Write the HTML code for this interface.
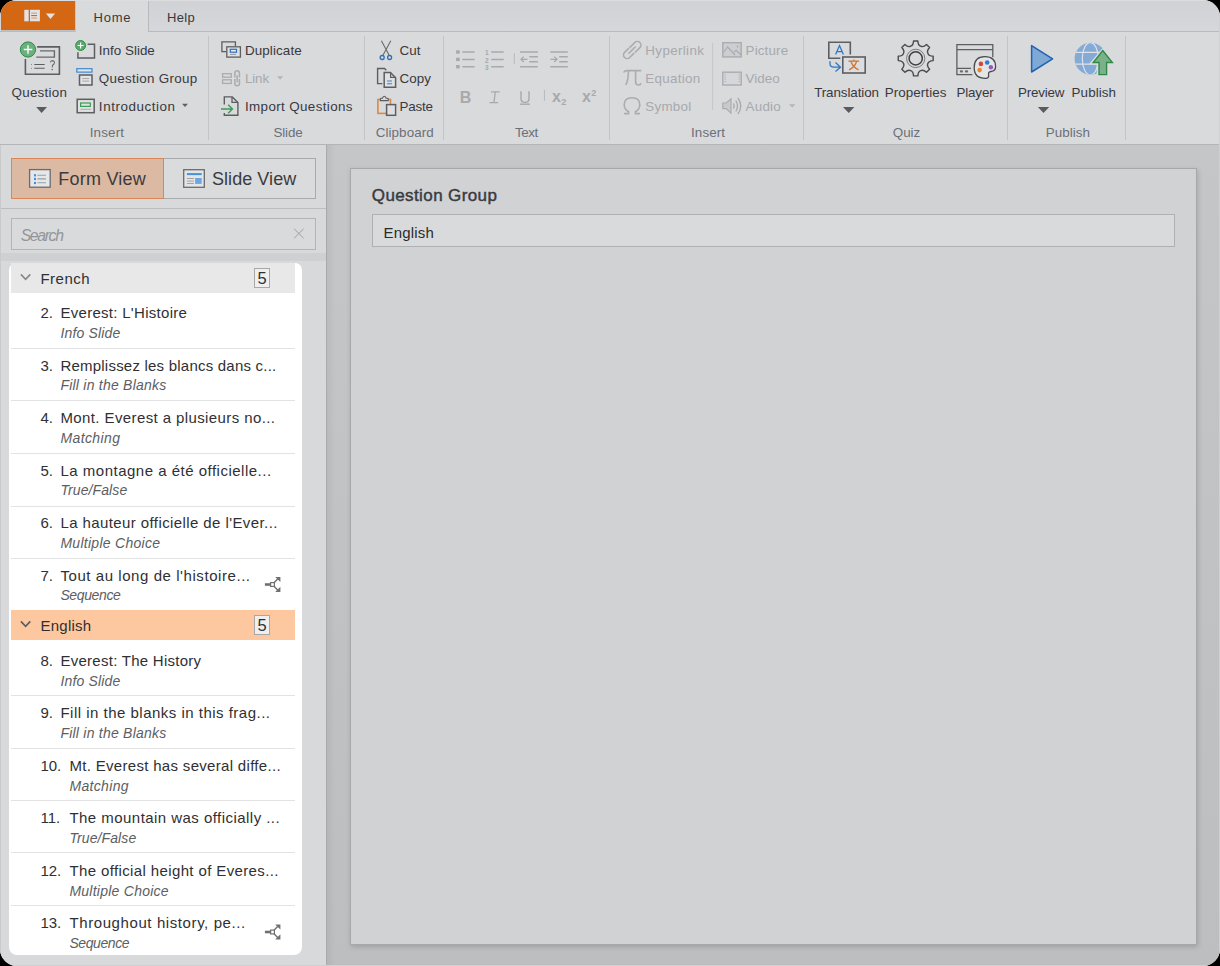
<!DOCTYPE html>
<html><head><meta charset="utf-8"><style>
html,body{margin:0;padding:0;width:1220px;height:966px;overflow:hidden;background:#000;}
#win{position:absolute;left:0;top:0;width:1220px;height:966px;border-radius:17px;overflow:hidden;background:#d9dadc;}
.t{position:absolute;white-space:nowrap;font-family:"Liberation Sans", sans-serif;}
.r{position:absolute;box-sizing:border-box;}
</style></head><body><div id="win">
<div class="r" style="left:0px;top:0px;width:1220px;height:31px;background:linear-gradient(180deg,#d0d2d5,#d6d7da);border-top:1px solid #dcdddf;"></div>
<div class="r" style="left:0px;top:31px;width:1220px;height:114px;background:#d9dadc;border-top:1px solid #b9babd;border-bottom:1px solid #b4b5b8;"></div>
<div class="r" style="left:75px;top:1px;width:74px;height:31px;background:#d9dadc;border-left:1px solid #c4c5c8;border-right:1px solid #b9babd;"></div>
<div class="r" style="left:1px;top:1px;width:74px;height:30px;background:#d36714;"></div>
<svg class="r" style="left:24px;top:8px;" width="34" height="16" viewBox="0 0 34 16"><rect x="0.3" y="1.8" width="4.4" height="11.5" fill="#e2e3e5"/><rect x="6" y="1.8" width="9.9" height="11.5" fill="#e2e3e5"/><rect x="7.2" y="4.6" width="5.8" height="1.1" fill="#e59a6a"/><rect x="7.2" y="7" width="5.8" height="1.1" fill="#d36714"/><rect x="7.2" y="9.5" width="5.8" height="1.1" fill="#e59a6a"/><path d="M21.9 5.4 L31.1 5.4 L26.5 11 Z" fill="#e2e3e5"/></svg>
<div class="r" style="left:1px;top:30px;width:75px;height:1px;background:#bfc0c2;"></div>
<div class="t" id="t0" style="left:93.49px;top:10.55px;font-size:13px;line-height:13px;color:#38393c;letter-spacing:0.800px;">Home</div>
<div class="t" id="t1" style="left:166.99px;top:10.95px;font-size:13px;line-height:13px;color:#38393c;letter-spacing:0.333px;">Help</div>
<div class="r" style="left:208px;top:36px;width:1px;height:104px;background:#c3c4c7;"></div>
<div class="r" style="left:364px;top:36px;width:1px;height:104px;background:#c3c4c7;"></div>
<div class="r" style="left:443px;top:36px;width:1px;height:104px;background:#c3c4c7;"></div>
<div class="r" style="left:609px;top:36px;width:1px;height:104px;background:#c3c4c7;"></div>
<div class="r" style="left:803px;top:36px;width:1px;height:104px;background:#c3c4c7;"></div>
<div class="r" style="left:1007px;top:36px;width:1px;height:104px;background:#c3c4c7;"></div>
<div class="r" style="left:1125px;top:36px;width:1px;height:104px;background:#c3c4c7;"></div>
<div class="r" style="left:0px;top:145px;width:326px;height:821px;background:#d8d9db;"></div>
<div class="r" style="left:326px;top:145px;width:1px;height:821px;background:#a9aaad;"></div>
<div class="r" style="left:0px;top:208px;width:326px;height:1px;background:#bcbdc0;"></div>
<div class="r" style="left:327px;top:145px;width:893px;height:821px;background:linear-gradient(180deg,#c5c6c8 0%,#bdbec0 100%);"></div>
<div class="r" style="left:327px;top:145px;width:8px;height:821px;background:linear-gradient(90deg,rgba(0,0,0,0.05),rgba(0,0,0,0));"></div>
<div class="t" id="t2" style="left:11.56px;top:85.71px;font-size:13.4px;line-height:13.4px;color:#38393c;letter-spacing:0.243px;">Question</div>
<div class="t" id="t3" style="left:98.86px;top:43.81px;font-size:13.4px;line-height:13.4px;color:#38393c;letter-spacing:0.011px;">Info Slide</div>
<div class="t" id="t4" style="left:98.86px;top:71.81px;font-size:13.4px;line-height:13.4px;color:#38393c;letter-spacing:0.300px;">Question Group</div>
<div class="t" id="t5" style="left:98.86px;top:99.81px;font-size:13.4px;line-height:13.4px;color:#38393c;letter-spacing:0.564px;">Introduction</div>
<div class="t" id="t6" style="left:89.66px;top:125.91px;font-size:13.4px;line-height:13.4px;color:#6c6f76;letter-spacing:0.180px;">Insert</div>
<div class="t" id="t7" style="left:244.96px;top:44.11px;font-size:13.4px;line-height:13.4px;color:#38393c;letter-spacing:0.112px;">Duplicate</div>
<div class="t" id="t8" style="left:244.96px;top:71.71px;font-size:13.4px;line-height:13.4px;color:#a7a9ad;letter-spacing:-0.133px;">Link</div>
<div class="t" id="t9" style="left:244.96px;top:99.86px;font-size:13.4px;line-height:13.4px;color:#38393c;letter-spacing:0.373px;">Import Questions</div>
<div class="t" id="t10" style="left:273.56px;top:125.91px;font-size:13.4px;line-height:13.4px;color:#6c6f76;letter-spacing:-0.175px;">Slide</div>
<div class="t" id="t11" style="left:399.46px;top:43.91px;font-size:13.4px;line-height:13.4px;color:#38393c;letter-spacing:0.100px;">Cut</div>
<div class="t" id="t12" style="left:399.46px;top:71.81px;font-size:13.4px;line-height:13.4px;color:#38393c;letter-spacing:0.067px;">Copy</div>
<div class="t" id="t13" style="left:399.46px;top:99.81px;font-size:13.4px;line-height:13.4px;color:#38393c;letter-spacing:-0.175px;">Paste</div>
<div class="t" id="t14" style="left:375.76px;top:125.91px;font-size:13.4px;line-height:13.4px;color:#6c6f76;letter-spacing:0.075px;">Clipboard</div>
<div class="t" id="t15" style="left:515.06px;top:125.91px;font-size:13.4px;line-height:13.4px;color:#6c6f76;letter-spacing:-0.467px;">Text</div>
<div class="t" id="t16" style="left:645.36px;top:43.81px;font-size:13.4px;line-height:13.4px;color:#a7a9ad;letter-spacing:0.338px;">Hyperlink</div>
<div class="t" id="t17" style="left:645.36px;top:71.81px;font-size:13.4px;line-height:13.4px;color:#a7a9ad;letter-spacing:0.286px;">Equation</div>
<div class="t" id="t18" style="left:645.36px;top:99.81px;font-size:13.4px;line-height:13.4px;color:#a7a9ad;letter-spacing:0.240px;">Symbol</div>
<div class="t" id="t19" style="left:745.56px;top:43.81px;font-size:13.4px;line-height:13.4px;color:#a7a9ad;letter-spacing:0.150px;">Picture</div>
<div class="t" id="t20" style="left:745.56px;top:71.81px;font-size:13.4px;line-height:13.4px;color:#a7a9ad;letter-spacing:0.025px;">Video</div>
<div class="t" id="t21" style="left:745.56px;top:99.81px;font-size:13.4px;line-height:13.4px;color:#a7a9ad;letter-spacing:0.225px;">Audio</div>
<div class="t" id="t22" style="left:691.06px;top:125.91px;font-size:13.4px;line-height:13.4px;color:#6c6f76;letter-spacing:0.100px;">Insert</div>
<div class="t" id="t23" style="left:814.16px;top:85.91px;font-size:13.4px;line-height:13.4px;color:#38393c;letter-spacing:-0.090px;">Translation</div>
<div class="t" id="t24" style="left:884.76px;top:85.91px;font-size:13.4px;line-height:13.4px;color:#38393c;letter-spacing:0.067px;">Properties</div>
<div class="t" id="t25" style="left:956.56px;top:85.91px;font-size:13.4px;line-height:13.4px;color:#38393c;letter-spacing:-0.180px;">Player</div>
<div class="t" id="t26" style="left:892.86px;top:125.91px;font-size:13.4px;line-height:13.4px;color:#6c6f76;letter-spacing:-0.100px;">Quiz</div>
<div class="t" id="t27" style="left:1017.96px;top:85.91px;font-size:13.4px;line-height:13.4px;color:#38393c;letter-spacing:-0.183px;">Preview</div>
<div class="t" id="t28" style="left:1071.56px;top:85.91px;font-size:13.4px;line-height:13.4px;color:#38393c;letter-spacing:0.100px;">Publish</div>
<div class="t" id="t29" style="left:1045.86px;top:125.91px;font-size:13.4px;line-height:13.4px;color:#6c6f76;letter-spacing:0.017px;">Publish</div>
<div class="r" style="left:11px;top:158px;width:153px;height:41px;background:#dcb9a2;border:1px solid #d98659;"></div>
<div class="r" style="left:164px;top:158px;width:152px;height:41px;background:#dadbdd;border:1px solid #a9aaad;border-left:none;"></div>
<div class="t" id="t30" style="left:58.34px;top:169.70px;font-size:18px;line-height:18px;color:#3a3b3e;letter-spacing:0.213px;">Form View</div>
<div class="t" id="t31" style="left:211.94px;top:169.70px;font-size:18px;line-height:18px;color:#3a3b3e;letter-spacing:0.067px;">Slide View</div>
<div class="r" style="left:11px;top:218px;width:305px;height:32px;background:#d9dadc;border:1px solid #b3b4b7;"></div>
<div class="t" id="t32" style="left:20.69px;top:228.17px;font-size:15.8px;line-height:15.8px;color:#939599;font-style:italic;letter-spacing:-1.360px;">Search</div>
<svg class="r" style="left:293px;top:228px;" width="12" height="11" viewBox="0 0 12 11"><path d="M1.2 0.8 L10.6 10.2 M10.6 0.8 L1.2 10.2" stroke="#9c9ea1" stroke-width="1"/></svg>
<div class="r" style="left:0px;top:253px;width:326px;height:8px;background:#cfd0d2;"></div>
<div class="r" style="left:0px;top:145px;width:1px;height:821px;background:#c9cacc;"></div>
<div class="r" style="left:9px;top:263px;width:293px;height:692px;background:#ffffff;border-radius:7px 7px 8px 8px;"></div>
<div class="r" style="left:11px;top:263px;width:284px;height:30px;background:#e8e8e8;"></div>
<svg class="r" style="left:20px;top:273px;" width="12" height="9" viewBox="0 0 12 9"><path d="M0.9 1.4 L5.6 6.4 L10.3 1.4" fill="none" stroke="#85878b" stroke-width="1.6"/></svg>
<div class="t" id="t33" style="left:40.45px;top:271.35px;font-size:15px;line-height:15px;color:#2f3033;letter-spacing:0.480px;">French</div>
<div class="r" style="left:254px;top:268px;width:16px;height:20px;background:#efefef;border:1px solid #a8a8a8;"></div>
<div class="t" id="t34" style="left:257.45px;top:270.28px;font-size:16.5px;line-height:16.5px;color:#2f3033;">5</div>
<div class="t" id="t35" style="left:40.45px;top:305.05px;font-size:15px;line-height:15px;color:#2f3033;">2.</div>
<div class="t" id="t36" style="left:60.45px;top:305.05px;font-size:15px;line-height:15px;color:#2f3033;letter-spacing:0.289px;">Everest: L'Histoire</div>
<div class="t" id="t37" style="left:60.42px;top:325.60px;font-size:14px;line-height:14px;color:#5c5e62;font-style:italic;letter-spacing:0.156px;">Info Slide</div>
<div class="r" style="left:11px;top:348px;width:284px;height:1px;background:#e3e3e3;"></div>
<div class="t" id="t38" style="left:40.45px;top:357.55px;font-size:15px;line-height:15px;color:#2f3033;">3.</div>
<div class="t" id="t39" style="left:60.45px;top:357.55px;font-size:15px;line-height:15px;color:#2f3033;letter-spacing:0.217px;">Remplissez les blancs dans c...</div>
<div class="t" id="t40" style="left:60.42px;top:378.10px;font-size:14px;line-height:14px;color:#5c5e62;font-style:italic;letter-spacing:0.229px;">Fill in the Blanks</div>
<div class="r" style="left:11px;top:400px;width:284px;height:1px;background:#e3e3e3;"></div>
<div class="t" id="t41" style="left:40.45px;top:410.05px;font-size:15px;line-height:15px;color:#2f3033;">4.</div>
<div class="t" id="t42" style="left:60.45px;top:410.05px;font-size:15px;line-height:15px;color:#2f3033;letter-spacing:0.397px;">Mont. Everest a plusieurs no...</div>
<div class="t" id="t43" style="left:60.42px;top:430.60px;font-size:14px;line-height:14px;color:#5c5e62;font-style:italic;letter-spacing:0.400px;">Matching</div>
<div class="r" style="left:11px;top:453px;width:284px;height:1px;background:#e3e3e3;"></div>
<div class="t" id="t44" style="left:40.45px;top:462.55px;font-size:15px;line-height:15px;color:#2f3033;">5.</div>
<div class="t" id="t45" style="left:60.45px;top:462.55px;font-size:15px;line-height:15px;color:#2f3033;letter-spacing:0.500px;">La montagne a été officielle...</div>
<div class="t" id="t46" style="left:60.42px;top:483.10px;font-size:14px;line-height:14px;color:#5c5e62;font-style:italic;letter-spacing:0.100px;">True/False</div>
<div class="r" style="left:11px;top:506px;width:284px;height:1px;background:#e3e3e3;"></div>
<div class="t" id="t47" style="left:40.45px;top:515.05px;font-size:15px;line-height:15px;color:#2f3033;">6.</div>
<div class="t" id="t48" style="left:60.45px;top:515.05px;font-size:15px;line-height:15px;color:#2f3033;letter-spacing:0.406px;">La hauteur officielle de l'Ever...</div>
<div class="t" id="t49" style="left:60.42px;top:535.60px;font-size:14px;line-height:14px;color:#5c5e62;font-style:italic;letter-spacing:0.279px;">Multiple Choice</div>
<div class="r" style="left:11px;top:558px;width:284px;height:1px;background:#e3e3e3;"></div>
<div class="t" id="t50" style="left:40.45px;top:567.55px;font-size:15px;line-height:15px;color:#2f3033;">7.</div>
<div class="t" id="t51" style="left:60.45px;top:567.55px;font-size:15px;line-height:15px;color:#2f3033;letter-spacing:0.564px;">Tout au long de l'histoire...</div>
<div class="t" id="t52" style="left:60.42px;top:588.10px;font-size:14px;line-height:14px;color:#5c5e62;font-style:italic;letter-spacing:-0.371px;">Sequence</div>
<div class="r" style="left:11px;top:610px;width:284px;height:30px;background:#fdc79f;"></div>
<svg class="r" style="left:20px;top:620px;" width="12" height="9" viewBox="0 0 12 9"><path d="M0.9 1.4 L5.6 6.4 L10.3 1.4" fill="none" stroke="#595c62" stroke-width="1.6"/></svg>
<div class="t" id="t53" style="left:40.45px;top:618.35px;font-size:15px;line-height:15px;color:#2f3033;letter-spacing:0.250px;">English</div>
<div class="r" style="left:254px;top:615px;width:16px;height:20px;background:#efefef;border:1px solid #a8a8a8;"></div>
<div class="t" id="t54" style="left:257.45px;top:617.27px;font-size:16.5px;line-height:16.5px;color:#2f3033;">5</div>
<div class="t" id="t55" style="left:40.45px;top:652.95px;font-size:15px;line-height:15px;color:#2f3033;">8.</div>
<div class="t" id="t56" style="left:60.45px;top:652.95px;font-size:15px;line-height:15px;color:#2f3033;letter-spacing:0.263px;">Everest: The History</div>
<div class="t" id="t57" style="left:60.42px;top:673.50px;font-size:14px;line-height:14px;color:#5c5e62;font-style:italic;letter-spacing:0.156px;">Info Slide</div>
<div class="r" style="left:11px;top:695px;width:284px;height:1px;background:#e3e3e3;"></div>
<div class="t" id="t58" style="left:40.45px;top:705.45px;font-size:15px;line-height:15px;color:#2f3033;">9.</div>
<div class="t" id="t59" style="left:60.45px;top:705.45px;font-size:15px;line-height:15px;color:#2f3033;letter-spacing:0.488px;">Fill in the blanks in this frag...</div>
<div class="t" id="t60" style="left:60.42px;top:726.00px;font-size:14px;line-height:14px;color:#5c5e62;font-style:italic;letter-spacing:0.229px;">Fill in the Blanks</div>
<div class="r" style="left:11px;top:748px;width:284px;height:1px;background:#e3e3e3;"></div>
<div class="t" id="t61" style="left:40.45px;top:757.95px;font-size:15px;line-height:15px;color:#2f3033;">10.</div>
<div class="t" id="t62" style="left:69.45px;top:757.95px;font-size:15px;line-height:15px;color:#2f3033;letter-spacing:0.313px;">Mt. Everest has several diffe...</div>
<div class="t" id="t63" style="left:69.42px;top:778.50px;font-size:14px;line-height:14px;color:#5c5e62;font-style:italic;letter-spacing:0.343px;">Matching</div>
<div class="r" style="left:11px;top:800px;width:284px;height:1px;background:#e3e3e3;"></div>
<div class="t" id="t64" style="left:40.45px;top:810.45px;font-size:15px;line-height:15px;color:#2f3033;">11.</div>
<div class="t" id="t65" style="left:69.45px;top:810.45px;font-size:15px;line-height:15px;color:#2f3033;letter-spacing:0.457px;">The mountain was officially ...</div>
<div class="t" id="t66" style="left:69.42px;top:831.00px;font-size:14px;line-height:14px;color:#5c5e62;font-style:italic;letter-spacing:0.100px;">True/False</div>
<div class="r" style="left:11px;top:852px;width:284px;height:1px;background:#e3e3e3;"></div>
<div class="t" id="t67" style="left:40.45px;top:862.95px;font-size:15px;line-height:15px;color:#2f3033;">12.</div>
<div class="t" id="t68" style="left:69.45px;top:862.95px;font-size:15px;line-height:15px;color:#2f3033;letter-spacing:0.377px;">The official height of Everes...</div>
<div class="t" id="t69" style="left:69.42px;top:883.50px;font-size:14px;line-height:14px;color:#5c5e62;font-style:italic;letter-spacing:0.250px;">Multiple Choice</div>
<div class="r" style="left:11px;top:905px;width:284px;height:1px;background:#e3e3e3;"></div>
<div class="t" id="t70" style="left:40.45px;top:915.45px;font-size:15px;line-height:15px;color:#2f3033;">13.</div>
<div class="t" id="t71" style="left:69.45px;top:915.45px;font-size:15px;line-height:15px;color:#2f3033;letter-spacing:0.596px;">Throughout history, pe...</div>
<div class="t" id="t72" style="left:69.42px;top:936.00px;font-size:14px;line-height:14px;color:#5c5e62;font-style:italic;letter-spacing:-0.414px;">Sequence</div>
<div class="r" style="left:1219px;top:0px;width:1px;height:966px;background:#cfd0d2;"></div>
<div class="r" style="left:0px;top:965px;width:1220px;height:1px;background:#cfd0d2;"></div>
<div class="r" style="left:350px;top:168px;width:847px;height:777px;background:#d1d2d4;border:1px solid #a7a8ab;box-shadow:1px 2px 5px rgba(0,0,0,0.16);"></div>
<div class="t" id="t73" style="left:371.81px;top:187.35px;font-size:17px;line-height:17px;color:#3a3b3e;letter-spacing:0.392px;-webkit-text-stroke:0.45px #3a3b3e;">Question Group</div>
<div class="r" style="left:372px;top:214px;width:803px;height:33px;background:#d9dadc;border:1px solid #afb0b3;"></div>
<div class="t" id="t74" style="left:383.45px;top:224.65px;font-size:15px;line-height:15px;color:#2a2b2e;letter-spacing:0.183px;">English</div>
<svg class="r" style="left:0;top:0" width="1220" height="260" viewBox="0 0 1220 260"><path d="M37.2 46.9 H59.4 V74.3 H25.4 V59" fill="none" stroke="#5d5e61" stroke-width="1.6"/><path d="M40 50.9 H54.4 V57.1 H36.3" fill="none" stroke="#67686b" stroke-width="1.4"/><path d="M34.3 64.5 H44.7 M34.3 68.3 H44.7" stroke="#5d5e61" stroke-width="1.1"/><path d="M31 64.5 h1 M31 68.3 h1" stroke="#888" stroke-width="1"/><path d="M50.3 62.3 Q50.8 60.6 52.5 60.6 Q54.5 60.8 54.5 62.6 Q54.3 64.3 52.5 65.3 L52.2 67.3" fill="none" stroke="#6c6d70" stroke-width="1.1"/><circle cx="52.2" cy="69.6" r="0.8" fill="#6c6d70"/><circle cx="27.96" cy="49.5" r="7.6" fill="#6bb17d" stroke="#2b8843" stroke-width="1"/><path d="M23.8 49.5 H32.3 M28 45.3 V53.8" stroke="#fff" stroke-width="1.4"/><path d="M87.6 44.3 H94.5 V58 H77.9 V52.3" fill="none" stroke="#5d5e61" stroke-width="1.5"/><circle cx="80.6" cy="45.5" r="5" fill="#5aa86d" stroke="#2f9448" stroke-width="1"/><path d="M77.6 45.5 H83.6 M80.6 42.5 V48.5" stroke="#fff" stroke-width="1.2"/><rect x="76.8" y="68.7" width="15.2" height="3.4" fill="#dfe5ec" stroke="#3f87cd" stroke-width="1.2"/><rect x="79.5" y="75" width="12.5" height="10" fill="#e2e3e5" stroke="#5d5e61" stroke-width="1.5"/><path d="M82.3 78.6 H89.2 M82.3 81.1 H89.2" stroke="#a5a6a9" stroke-width="1"/><rect x="77.2" y="99.3" width="17" height="13.4" fill="#e0e1e3" stroke="#5d5e61" stroke-width="1.5"/><rect x="80.6" y="103" width="9.7" height="3.4" fill="none" stroke="#3b9b55" stroke-width="1.2"/><path d="M80.4 109.3 H91" stroke="#a9aaad" stroke-width="1"/><path d="M182 103.8 H188 L185 106.9 Z" fill="#5f6064"/><path d="M226.2 51.6 H221.9 V41.9 H235.4 V46" fill="none" stroke="#5d5e61" stroke-width="1.3"/><rect x="226.8" y="46.8" width="13.6" height="10.3" fill="#dfe0e2" stroke="#5d5e61" stroke-width="1.3"/><rect x="230.3" y="49.3" width="6.2" height="2.9" fill="#e4ecf4" stroke="#2f6fb8" stroke-width="1.2"/><path d="M230 54.4 H236" stroke="#8d8e91" stroke-width="0.9"/><rect x="222.6" y="73.7" width="8.7" height="3.5" fill="none" stroke="#abacaf" stroke-width="1.3"/><rect x="222.6" y="79.8" width="8.7" height="3.6" fill="none" stroke="#abacaf" stroke-width="1.3"/><path d="M234.85 77.6 V73.15 A2.3 2.3 0 0 1 239.45 73.15 V77.6 M234.85 79 V83.55 A2.3 2.3 0 0 0 239.45 83.55 V79 M237.15 75.3 V82.2" fill="none" stroke="#abacaf" stroke-width="1.5"/><path d="M277 76.2 H283.2 L280.1 79.4 Z" fill="#b3b4b7"/><path d="M224.3 104.4 V96.9 H232.3 L237.9 102.5 V115.2 H224.3 V113.1" fill="none" stroke="#5d5e61" stroke-width="1.4"/><path d="M232 97 V102.3 H237.8" fill="none" stroke="#5d5e61" stroke-width="1.3"/><path d="M221 109 H232.2 M228.2 104.8 L232.4 109 L228.2 113.2" fill="none" stroke="#3e9a58" stroke-width="1.5"/><path d="M381.4 40.8 L389.3 55.5 M390.8 40.8 L382.8 55.5" stroke="#6a6b6e" stroke-width="1.1"/><circle cx="382.2" cy="57.5" r="2" fill="#dbdcde" stroke="#2f6db8" stroke-width="1.3"/><circle cx="389.6" cy="57.5" r="2" fill="#dbdcde" stroke="#2f6db8" stroke-width="1.3"/><path d="M382.4 83.6 H377.6 V68.5 H384.5 L386.3 70.3" fill="none" stroke="#5d5e61" stroke-width="1.4"/><path d="M384.2 72.5 H390.4 L395.6 77.7 V87.2 H384.2 Z" fill="#e0e1e3" stroke="#5d5e61" stroke-width="1.5"/><path d="M390.6 72.5 V77.3 H395.6" fill="none" stroke="#5d5e61" stroke-width="1.2"/><path d="M387 81 H392 M387 83.7 H392" stroke="#3a80cc" stroke-width="1.1"/><rect x="377.9" y="99.5" width="12.6" height="13.9" fill="none" stroke="#dc8a3e" stroke-width="1.6"/><path d="M380.4 100.6 V98.9 Q380.4 98.3 381.1 98.3 H382.5 Q382.9 96.2 384.3 96.2 Q385.7 96.2 386.1 98.3 H387.5 Q388.2 98.3 388.2 98.9 V100.6 Z" fill="#dcdddf" stroke="#5a5b5e" stroke-width="1.1"/><rect x="386.6" y="104.6" width="9" height="10.7" fill="#dedfe1" stroke="#5d5e61" stroke-width="1.5"/><rect x="456.1" y="50.3" width="3.6" height="3.4" fill="#a8a9ac"/><path d="M462.3 52.0 H474.6 M491.2 52.0 H503.7" stroke="#a8a9ac" stroke-width="1.5"/><rect x="456.1" y="57.7" width="3.6" height="3.4" fill="#a8a9ac"/><path d="M462.3 59.4 H474.6 M491.2 59.4 H503.7" stroke="#a8a9ac" stroke-width="1.5"/><rect x="456.1" y="65.0" width="3.6" height="3.4" fill="#a8a9ac"/><path d="M462.3 66.7 H474.6 M491.2 66.7 H503.7" stroke="#a8a9ac" stroke-width="1.5"/><text x="485" y="55" font-family="Liberation Sans" font-size="6.5" font-weight="bold" fill="#a8a9ac">1</text><text x="485" y="62.5" font-family="Liberation Sans" font-size="6.5" font-weight="bold" fill="#a8a9ac">2</text><text x="485" y="70" font-family="Liberation Sans" font-size="6.5" font-weight="bold" fill="#a8a9ac">3</text><path d="M514.3 53.2 V63.7 M544.4 90 V100.8" stroke="#b7b8bb" stroke-width="1"/><path d="M520.1 52 H537.9 M529.3 56.7 H537.9 M529.3 61.8 H537.9 M520.1 66.7 H537.9 M550.2 52 H567.8 M559.2 56.7 H567.8 M559.2 61.8 H567.8 M550.2 66.7 H567.8" stroke="#a8a9ac" stroke-width="1.5"/><path d="M527.5 59.3 H521 M523.8 56.6 L521 59.3 L523.8 62 M550.4 59.3 H557 M554.2 56.6 L557 59.3 L554.2 62" fill="none" stroke="#a8a9ac" stroke-width="1.3"/><text x="459.7" y="102.9" font-family="Liberation Sans" font-size="16" font-weight="bold" fill="#a8a9ac">B</text><path d="M491 91.8 H499.6 M489.6 102.6 H498.2 M495.3 91.8 L493.9 102.6" stroke="#a8a9ac" stroke-width="1.3" fill="none"/><path d="M521 91.3 V98.5 Q521 102.4 525 102.4 Q529 102.4 529 98.5 V91.3" fill="none" stroke="#a8a9ac" stroke-width="1.4"/><path d="M520.1 104.2 H529.9" stroke="#a8a9ac" stroke-width="1.4"/><text x="552" y="101.9" font-family="Liberation Sans" font-size="16" font-weight="bold" fill="#a8a9ac">x</text><text x="561.2" y="104.5" font-family="Liberation Sans" font-size="9" font-weight="bold" fill="#a8a9ac">2</text><text x="582.1" y="101.9" font-family="Liberation Sans" font-size="16" font-weight="bold" fill="#a8a9ac">x</text><text x="591.3" y="96" font-family="Liberation Sans" font-size="9" font-weight="bold" fill="#a8a9ac">2</text><path d="M629.9 47.4 L634.8 42.5 A3.6 3.6 0 0 1 639.9 47.6 L635.5 52 M628.5 48.5 L624.6 52.4 A3.6 3.6 0 0 0 629.7 57.5 L633.8 53.4 M628.9 53.3 L635.2 47" fill="none" stroke="#abacaf" stroke-width="1.6" stroke-linecap="round"/><path d="M623.6 72.5 Q624.5 70.6 627 70.6 H641.2 M628.5 71 Q628.3 80 625.8 85 M635.6 71 V81.5 Q635.6 85 638.5 85 Q640.6 85 641 83.3" fill="none" stroke="#abacaf" stroke-width="1.6"/><path d="M624 113.6 H628.6 V111.8 Q624.2 109.5 624.2 104.8 Q624.2 97.8 632 97.8 Q639.8 97.8 639.8 104.8 Q639.8 109.5 635.4 111.8 V113.6 H640" fill="none" stroke="#abacaf" stroke-width="1.6"/><rect x="722.8" y="42.7" width="18.4" height="14.2" fill="#cdced1" stroke="#abacaf" stroke-width="1.4"/><path d="M723.5 52.5 L727.6 47 L735 55 M734 52 L736.2 50.3 L741 55" fill="none" stroke="#abacaf" stroke-width="1.2"/><circle cx="737.6" cy="46.5" r="0.9" fill="#abacaf"/><rect x="722.8" y="72.2" width="18.4" height="12.8" fill="#d6d7da" stroke="#abacaf" stroke-width="1.4"/><path d="M725.2 74.2 V83.5 M739.2 74.2 V83.5" stroke="#abacaf" stroke-width="1.2" stroke-dasharray="1 1.3"/><path d="M722.8 103 H726.2 L731 98.8 V113.1 L726.2 108.6 H722.8 Z" fill="#c9cacd" stroke="#abacaf" stroke-width="1.2"/><path d="M733.5 103.3 Q735 106 733.5 108.7 M735.8 100.6 Q739.2 106 735.8 111.4 M738 98 Q743.5 106 738 114" fill="none" stroke="#abacaf" stroke-width="1.4"/><path d="M712.6 43 V110" stroke="#c5c6c9" stroke-width="1"/><path d="M789 104.2 H795.4 L792.2 107.4 Z" fill="#b3b4b7"/><path d="M840.3 58.3 H828.8 V42.2 H850.3 V54.5" fill="none" stroke="#5d5e61" stroke-width="1.6"/><path d="M835.6 54.6 L839.5 45.6 L843.4 54.6 M836.9 51.6 H842.1" fill="none" stroke="#2f78c4" stroke-width="1.3"/><rect x="842.8" y="57" width="22.4" height="16" fill="#dcdde0" stroke="#5d5e61" stroke-width="1.6"/><path d="M848.4 61.1 H859.2 M853.8 59.4 V61.1 M851 61.5 Q853 67.5 858.6 69.8 M856.6 61.5 Q854.6 67.5 849 69.8" fill="none" stroke="#d2752c" stroke-width="1.3"/><path d="M830 61.2 V63.8 Q830 67.2 834 67.2 H840.5 M835.5 62.6 L840.5 67.2 L835.5 71.6" fill="none" stroke="#2f78c4" stroke-width="1.3"/><path d="M843 107.1 H854.4 L848.7 113.1 Z" fill="#5a5b5f"/><path d="M36.2 106.9 H47 L41.6 112.9 Z" fill="#5a5b5f"/><path d="M1037.9 106.9 H1049.2 L1043.5 112.9 Z" fill="#5a5b5f"/><path d="M913.51 40.94 L917.89 40.94 C917.97 43.37 918.23 45.44 920.75 46.20 C923.07 47.45 924.72 46.17 926.50 44.50 L929.60 47.60 C927.93 49.38 926.65 51.03 927.90 53.35 C928.66 55.87 930.73 56.13 933.16 56.21 L933.16 60.59 C930.73 60.67 928.66 60.93 927.90 63.45 C926.65 65.77 927.93 67.42 929.60 69.20 L926.50 72.30 C924.72 70.63 923.07 69.35 920.75 70.60 C918.23 71.36 917.97 73.43 917.89 75.86 L913.51 75.86 C913.43 73.43 913.17 71.36 910.65 70.60 C908.33 69.35 906.68 70.63 904.90 72.30 L901.80 69.20 C903.47 67.42 904.75 65.77 903.50 63.45 C902.74 60.93 900.67 60.67 898.24 60.59 L898.24 56.21 C900.67 56.13 902.74 55.87 903.50 53.35 C904.75 51.03 903.47 49.38 901.80 47.60 L904.90 44.50 C906.68 46.17 908.33 47.45 910.65 46.20 C913.17 45.44 913.43 43.37 913.51 40.94 Z" fill="none" stroke="#4a4b4e" stroke-width="1.4" stroke-linejoin="round"/><circle cx="915.7" cy="58.4" r="9.15" fill="none" stroke="#6f7073" stroke-width="0.9"/><circle cx="915.7" cy="58.4" r="6.6" fill="none" stroke="#3f4043" stroke-width="1.5"/><path d="M972.4 74.7 H956.9 V44.6 H992.8 V57.3 M956.9 49.6 H992.8 M956.9 68.3 H971" fill="none" stroke="#5d5e61" stroke-width="1.3"/><rect x="959.8" y="70.3" width="3.2" height="2.2" rx="1.1" fill="#6a6b6e"/><rect x="964.9" y="70.3" width="3.2" height="2.2" rx="1.1" fill="#6a6b6e"/><path d="M984.8 56.6 Q995.6 56.6 995.6 66.8 Q995.6 71 991 71.5 Q988 71.8 988.6 74.6 Q989.3 78.3 985.5 78.4 Q974.2 78.4 974.2 67.5 Q974.2 56.6 984.8 56.6 Z" fill="#e4e5e7" stroke="#4a4b4e" stroke-width="1.3"/><circle cx="980.9" cy="63.9" r="2.3" fill="#d9443f"/><circle cx="987.2" cy="62.5" r="2.3" fill="#2f7fd0"/><circle cx="990.9" cy="67.3" r="2.2" fill="#9a55c0"/><circle cx="979.6" cy="70.1" r="2.3" fill="#e7882e"/><path d="M1031.6 45.6 V72 L1052.6 58.8 Z" fill="#80a8d5" stroke="#1f63b3" stroke-width="1.5" stroke-linejoin="round"/><defs><clipPath id="gc"><circle cx="1090.6" cy="58.8" r="16"/></clipPath></defs><circle cx="1090.6" cy="58.8" r="16" fill="#84aad6"/><g clip-path="url(#gc)" stroke="#dfe3e8" stroke-width="1.2" fill="none"><path d="M1070 52.3 H1112 M1070 64.2 H1112"/><ellipse cx="1090.3" cy="58.8" rx="8" ry="16.2"/></g><path d="M1102.7 50.2 L1113.6 63 H1107.2 V75.6 H1098.2 V63 H1091.8 Z" fill="none" stroke="#dbdcde" stroke-width="3"/><path d="M1102.7 50.5 L1112.4 62.5 H1106.6 V74.6 H1099 V62.5 H1093.2 Z" fill="#7bb08b" stroke="#2f8a46" stroke-width="1.4" stroke-linejoin="miter"/><rect x="29.6" y="169.6" width="20.6" height="17.6" fill="#e6e7e9" stroke="#6a6b6e" stroke-width="1.3"/><rect x="34" y="174.2" width="2" height="2.2" fill="#3d8de0"/><rect x="34" y="177.9" width="2" height="2.2" fill="#3d8de0"/><rect x="34" y="181.9" width="2" height="2.2" fill="#3d8de0"/><path d="M37.4 175.2 H46 M37.4 178.9 H46 M37.4 182.8 H46" stroke="#9d9ea1" stroke-width="1.1"/><rect x="183.7" y="169.7" width="20.6" height="17.6" fill="#e4e5e7" stroke="#6a6b6e" stroke-width="1.3"/><rect x="186.9" y="173.1" width="14.8" height="2" fill="#4a90d9"/><path d="M186.9 178.5 H193.9 M186.9 181.1 H193.9 M186.9 183.5 H193.9" stroke="#a0a1a4" stroke-width="1"/><rect x="195.1" y="178" width="6.6" height="5.9" fill="#6aa8e3"/></svg>
<svg class="r" style="left:262px;top:576px" width="22" height="20" viewBox="262 576 22 20"><path d="M264.9 584.5 H270.4" stroke="#707070" stroke-width="2.6"/><rect x="270.6" y="582.6" width="3.8" height="3.8" fill="none" stroke="#707070" stroke-width="1.2"/><path d="M274 582.7 L278.6 578.1 M274 586.3 L278.6 590.9" stroke="#707070" stroke-width="1.4"/><path d="M275.2 576.9 H280.4 V582.1 Z M275.2 591.9 H280.4 V586.7 Z" fill="#707070"/></svg>
<svg class="r" style="left:262px;top:924px" width="22" height="20" viewBox="262 924 22 20"><path d="M264.9 932.0 H270.4" stroke="#707070" stroke-width="2.6"/><rect x="270.6" y="930.1" width="3.8" height="3.8" fill="none" stroke="#707070" stroke-width="1.2"/><path d="M274 930.2 L278.6 925.6 M274 933.8 L278.6 938.4" stroke="#707070" stroke-width="1.4"/><path d="M275.2 924.4 H280.4 V929.6 Z M275.2 939.4 H280.4 V934.2 Z" fill="#707070"/></svg>
</div></body></html>
